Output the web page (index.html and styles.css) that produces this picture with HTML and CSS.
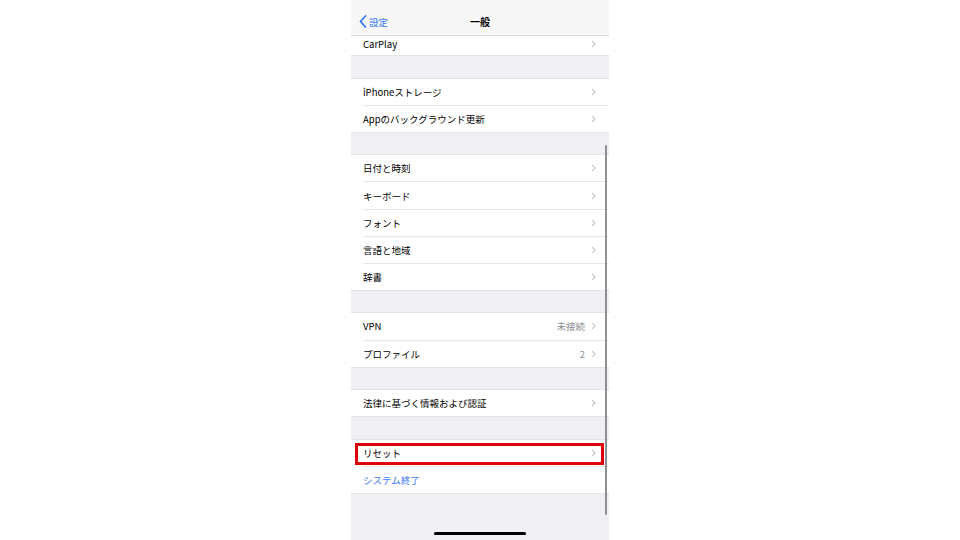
FILE: index.html
```html
<!DOCTYPE html>
<html lang="ja">

<head>
    <meta charset="UTF-8">
    <meta name="viewport" content="width=device-width, initial-scale=1.0">
    <title>一般</title>
    <link rel="stylesheet" href="styles.css">
</head>

<body>
    <div class="phone">
        <div class="nav-bar">
            <div class="nav-back">
                <svg width="8" height="13" viewBox="0 0 8 13">
                    <path d="M6.5 1 L1.5 6.5 L6.5 12" fill="none" stroke="#3478f6" stroke-width="1.8" stroke-linecap="round" stroke-linejoin="round" />
                </svg>
                <span>設定</span>
            </div>
            <div class="nav-title">一般</div>
            <div></div>
        </div>

        <div class="group first">
            <div class="row cut"><span class="label">CarPlay</span><svg class="chevron" viewBox="0 0 5 8"><path d="M1 1 L4 4 L1 7" /></svg></div>
        </div>

        <div class="group">
            <div class="row"><span class="label">iPhoneストレージ</span><svg class="chevron" viewBox="0 0 5 8"><path d="M1 1 L4 4 L1 7" /></svg></div>
            <div class="row"><span class="label">Appのバックグラウンド更新</span><svg class="chevron" viewBox="0 0 5 8"><path d="M1 1 L4 4 L1 7" /></svg></div>
        </div>

        <div class="group">
            <div class="row"><span class="label">日付と時刻</span><svg class="chevron" viewBox="0 0 5 8"><path d="M1 1 L4 4 L1 7" /></svg></div>
            <div class="row"><span class="label">キーボード</span><svg class="chevron" viewBox="0 0 5 8"><path d="M1 1 L4 4 L1 7" /></svg></div>
            <div class="row"><span class="label">フォント</span><svg class="chevron" viewBox="0 0 5 8"><path d="M1 1 L4 4 L1 7" /></svg></div>
            <div class="row"><span class="label">言語と地域</span><svg class="chevron" viewBox="0 0 5 8"><path d="M1 1 L4 4 L1 7" /></svg></div>
            <div class="row"><span class="label">辞書</span><svg class="chevron" viewBox="0 0 5 8"><path d="M1 1 L4 4 L1 7" /></svg></div>
        </div>

        <div class="group">
            <div class="row"><span class="label">VPN</span><span class="value">未接続</span><svg class="chevron" viewBox="0 0 5 8"><path d="M1 1 L4 4 L1 7" /></svg></div>
            <div class="row"><span class="label">プロファイル</span><span class="value">2</span><svg class="chevron" viewBox="0 0 5 8"><path d="M1 1 L4 4 L1 7" /></svg></div>
        </div>

        <div class="group">
            <div class="row"><span class="label">法律に基づく情報および認証</span><svg class="chevron" viewBox="0 0 5 8"><path d="M1 1 L4 4 L1 7" /></svg></div>
        </div>

        <div class="group">
            <div class="row highlight"><span class="label">リセット</span><svg class="chevron" viewBox="0 0 5 8"><path d="M1 1 L4 4 L1 7" /></svg></div>
            <div class="row"><span class="label link">システム終了</span></div>
        </div>

        <div class="scroll-bar"></div>
        <div class="home-indicator"></div>
    </div>
</body>

</html>
```

FILE: styles.css
```css
body {
    margin: 0;
    background-color: #fff;
    font-family: "Noto Sans CJK JP", "Noto Sans", sans-serif;
}

.phone {
    position: relative;
    width: 258px;
    height: 540px;
    margin: 0 auto;
    background-color: #efeff4;
    overflow: hidden;
}

.nav-bar {
    display: grid;
    grid-template-columns: 1fr auto 1fr;
    align-items: center;
    height: 36px;
    padding-top: 8px;
    box-sizing: border-box;
    background-color: #f7f7f8;
    border-bottom: 1px solid #dcdce0;
}

.nav-back {
    display: flex;
    align-items: center;
    gap: 2px;
    padding-left: 8px;
    color: #3478f6;
    font-size: 9.5px;
}

.nav-title {
    font-size: 10px;
    font-weight: bold;
    color: #000;
}

.group {
    margin-top: 21.6px;
    background-color: #fff;
    border-top: 1px solid #e3e3e7;
    border-bottom: 1px solid #e3e3e7;
}

.group.first {
    margin-top: 0;
    border-top: none;
}

.row {
    position: relative;
    display: flex;
    align-items: center;
    height: 26.1px;
    margin-left: 12px;
    padding-right: 13px;
    font-size: 9.5px;
    color: #000;
    border-bottom: 1px solid #e6e6ea;
}

.row:last-child {
    border-bottom: none;
}

.row.cut {
    height: 19px;
    padding-bottom: 4px;
    box-sizing: border-box;
}

.label {
    flex: 1;
}

.label.link {
    color: #3478f6;
}

.value {
    color: #8e8e93;
    margin-right: 6px;
}

.chevron {
    width: 5px;
    height: 8px;
    fill: none;
    stroke: #c7c7cc;
    stroke-width: 1.1;
}

.highlight::after {
    content: "";
    position: absolute;
    top: 3px;
    bottom: 1px;
    left: -8px;
    right: 5px;
    border: 3px solid #e0000b;
}

.scroll-bar {
    position: absolute;
    top: 145px;
    right: 2px;
    width: 2.5px;
    height: 370px;
    border-radius: 2px;
    background-color: #8e8e93;
}

.home-indicator {
    position: absolute;
    bottom: 5px;
    left: 83px;
    width: 92px;
    height: 3px;
    border-radius: 2px;
    background-color: #000;
}
```
